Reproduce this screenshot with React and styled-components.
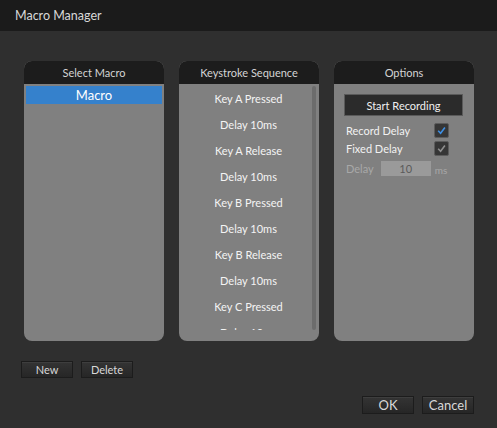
import React from "react";
import styled, { createGlobalStyle } from "styled-components";

const GlobalStyle = createGlobalStyle`
  html, body {
    margin: 0;
    padding: 0;
    background: #2f2f2f;
  }
  body {
    font-family: Lato, "Open Sans", "Liberation Sans", sans-serif;
  }
`;

const Window = styled.div`
  width: 497px;
  height: 428px;
  background: #2f2f2f;
  display: flex;
  flex-direction: column;
  overflow: hidden;
`;

const TitleBar = styled.div`
  height: 31px;
  background: #1b1b1b;
  color: #d8d8d8;
  font-size: 12.5px;
  display: flex;
  align-items: center;
  padding-left: 15px;
  padding-bottom: 1px;
  box-sizing: border-box;
`;

const Content = styled.div`
  flex: 1;
  padding: 30px 23px 0 24px;
  display: flex;
  flex-direction: column;
`;

const Panels = styled.div`
  display: flex;
  gap: 15px;
`;

const Panel = styled.div`
  width: 140px;
  height: 280px;
  border-radius: 8px;
  overflow: hidden;
  display: flex;
  flex-direction: column;
  background: #808080;
`;

const PanelHeader = styled.div`
  height: 23px;
  background: #1c1c1c;
  color: #d4d4d4;
  font-size: 11px;
  display: flex;
  align-items: center;
  justify-content: center;
`;

const PanelBody = styled.div`
  flex: 1;
  display: flex;
  flex-direction: ${(p) => (p.$column ? "column" : "row")};
  padding: ${(p) => p.$pad || "0"};
  min-height: 0;
`;

const MacroRow = styled.div`
  height: 18px;
  margin: 2px 2px 0;
  background: ${(p) => (p.$selected ? "#3581cc" : "transparent")};
  color: #ffffff;
  font-size: 13px;
  display: flex;
  align-items: center;
  justify-content: center;
`;

const SeqList = styled.div`
  flex: 1;
  height: 245px;
  padding-top: 1px;
  overflow: hidden;
`;

const SeqItem = styled.div`
  height: 26px;
  display: flex;
  align-items: center;
  justify-content: center;
  color: #f4f4f4;
  font-size: 11px;
  padding-left: 6px;
`;

const ScrollThumb = styled.div`
  width: 4px;
  height: 244px;
  margin: 2px 3px 0 0;
  border-radius: 2px;
  background: #6c6c6c;
`;

const RecordButton = styled.div`
  height: 22px;
  margin: 0 1px 5px 0;
  background: #2b2b2b;
  border: 1px solid #5a5a5a;
  box-sizing: border-box;
  color: #f0f0f0;
  font-size: 11px;
  display: flex;
  align-items: center;
  justify-content: center;
`;

const OptionRow = styled.div`
  height: 18px;
  display: flex;
  align-items: center;
  padding-left: 2px;
  margin-top: ${(p) => p.$gap || "0"};
  color: ${(p) => (p.$dim ? "#a8a8a8" : "#f2f2f2")};
  font-size: 11px;
`;

const OptionLabel = styled.span`
  flex: 1;
`;

const CheckBox = styled.span`
  flex: none;
  width: 15px;
  height: 15px;
  margin-right: 15px;
  border-radius: 2px;
  background-color: #363636;
  border: 1px solid #5c5c5c;
  box-sizing: border-box;
  display: flex;
  align-items: center;
  justify-content: center;
`;

const DelayInput = styled.div`
  width: 50px;
  height: 15px;
  margin-left: 7px;
  background: #9a9a9a;
  color: #5a5a5a;
  font-size: 11px;
  display: flex;
  align-items: center;
  justify-content: center;
`;

const Unit = styled.span`
  margin-left: 4px;
  margin-top: 4px;
  font-size: 10px;
  color: #a8a8a8;
`;

const ButtonRow = styled.div`
  display: flex;
  gap: 8px;
  justify-content: ${(p) => (p.$end ? "flex-end" : "flex-start")};
  margin: ${(p) => p.$margin};
`;

const Button = styled.div`
  width: 52px;
  height: ${(p) => (p.$big ? "18px" : "17px")};
  box-sizing: border-box;
  border: 1px solid #1c1c1c;
  background: linear-gradient(#343434, #262626);
  box-shadow: inset 0 1px 0 #3e3e3e;
  color: #d8d8d8;
  font-size: ${(p) => (p.$big ? "13px" : "11px")};
  display: flex;
  align-items: center;
  justify-content: center;
`;

// tick drawn inside the option checkboxes
const Tick = ({ color }) => (
  <svg width="9" height="9" viewBox="0 0 9 9" style={{ display: "block" }}>
    <path d="M1.2 4.8 L3.6 7.2 L7.9 1.6" fill="none" stroke={color} strokeWidth="1.6" />
  </svg>
);

const sequence = [
  "Key A Pressed",
  "Delay 10ms",
  "Key A Release",
  "Delay 10ms",
  "Key B Pressed",
  "Delay 10ms",
  "Key B Release",
  "Delay 10ms",
  "Key C Pressed",
  "Delay 10ms",
];

export default function App() {
  return (
    <Window>
      <GlobalStyle />
      <TitleBar>Macro Manager</TitleBar>
      <Content>
        <Panels>
          <Panel>
            <PanelHeader>Select Macro</PanelHeader>
            <PanelBody $column>
              <MacroRow $selected>Macro</MacroRow>
            </PanelBody>
          </Panel>

          <Panel>
            <PanelHeader>Keystroke Sequence</PanelHeader>
            <PanelBody>
              <SeqList>
                {sequence.map((s, i) => (
                  <SeqItem key={i}>{s}</SeqItem>
                ))}
              </SeqList>
              <ScrollThumb />
            </PanelBody>
          </Panel>

          <Panel>
            <PanelHeader>Options</PanelHeader>
            <PanelBody $column $pad="10px 10px 0 10px">
              <RecordButton>Start Recording</RecordButton>
              <OptionRow>
                <OptionLabel>Record Delay</OptionLabel>
                <CheckBox>
                  <Tick color="#3d8fe4" />
                </CheckBox>
              </OptionRow>
              <OptionRow>
                <OptionLabel>Fixed Delay</OptionLabel>
                <CheckBox>
                  <Tick color="#8e8e8e" />
                </CheckBox>
              </OptionRow>
              <OptionRow $dim $gap="2px">
                <span>Delay</span>
                <DelayInput>10</DelayInput>
                <Unit>ms</Unit>
              </OptionRow>
            </PanelBody>
          </Panel>
        </Panels>

        <ButtonRow $margin="20px 0 0 -3px">
          <Button>New</Button>
          <Button>Delete</Button>
        </ButtonRow>

        <ButtonRow $end $margin="18px 0 0 0">
          <Button $big>OK</Button>
          <Button $big>Cancel</Button>
        </ButtonRow>
      </Content>
    </Window>
  );
}
